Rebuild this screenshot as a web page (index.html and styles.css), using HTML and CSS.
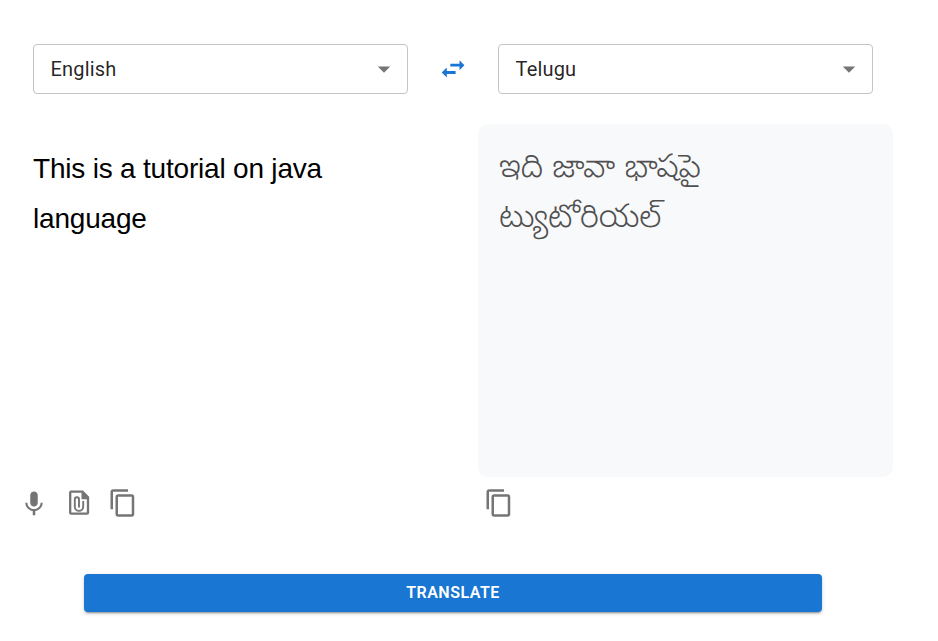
FILE: index.html
```html
<!DOCTYPE html>
<html lang="en">
<head>
<meta charset="utf-8">
<title>Translator</title>
<link rel="stylesheet" href="styles.css">
</head>
<body>
<main class="translator">
  <div class="languages">
    <div class="select"><span>English</span><svg class="arrow" viewBox="0 0 24 24"><path d="M7 10l5 5 5-5z"/></svg></div>
    <div class="swap"><svg viewBox="0 0 30 26"><path d="M12.300 7.800h9.200V4.300l4.900 5-4.900 5v-3.700h-9.200zM17.600 15.100H8.800V11.600L3.700 16.600l5.100 5v-3.700h8.800z"/></svg></div>
    <div class="select"><span>Telugu</span><svg class="arrow" viewBox="0 0 24 24"><path d="M7 10l5 5 5-5z"/></svg></div>
  </div>
  <div class="panels">
    <div class="panel source">This is a tutorial on java language</div>
    <div class="panel result" lang="te">ఇది జావా భాషపై<br>ట్యుటోరియల్</div>
  </div>
  <div class="tools">
    <div class="group">
      <svg class="mic" viewBox="0 -0.7 24 24"><path d="M12 14c1.660 0 3-1.340 3-3V5c0-1.660-1.340-3-3-3S9 3.340 9 5v6c0 1.660 1.340 3 3 3zm5.300-3c0 3-2.540 5.100-5.300 5.100S6.700 14 6.700 11H5c0 3.410 2.720 6.230 6 6.720V21h2v-3.280c3.280-.48 6-3.300 6-6.720z"/></svg>
      <svg class="attach" viewBox="0 0 30 30"><path class="fold" d="M17.500 3L25 10v1.300h-7.500z"/><path class="sheet" d="M6.800 3.700h11.700l5.500 5.500v15.500a1 1 0 0 1-1 1H7.200a1 1 0 0 1-1-1V4.700a1 1 0 0 1 .6-1z"/><path class="clip" d="M15 19.500V11.300a2.100 2.100 0 0 0-4.200 0v7.400a4.200 4.200 0 0 0 8.400 0V13"/></svg>
      <svg class="copy" viewBox="0 0 24 24"><path d="M16 1H4c-1.100 0-2 .9-2 2v14h2V3h12V1zm3 4H8c-1.100 0-2 .9-2 2v14c0 1.100.9 2 2 2h11c1.100 0 2-.9 2-2V7c0-1.100-.9-2-2-2zm0 16H8V7h11v14z"/></svg>
    </div>
    <div class="group">
      <svg class="copy" viewBox="0 0 24 24"><path d="M16 1H4c-1.100 0-2 .9-2 2v14h2V3h12V1zm3 4H8c-1.100 0-2 .9-2 2v14c0 1.100.9 2 2 2h11c1.100 0 2-.9 2-2V7c0-1.100-.9-2-2-2zm0 16H8V7h11v14z"/></svg>
    </div>
  </div>
  <button class="translate">TRANSLATE</button>
</main>
</body>
</html>
```
FILE: styles.css
```css
* { box-sizing: border-box; }
body { margin: 0; background: #fff; font-family: Roboto, sans-serif; }
.translator { width: 938px; height: 641px; padding-top: 44px; overflow: hidden; }
.languages { display: grid; grid-template-columns: 375px 90px 375px; margin-left: 33px; height: 50px; }
.select { display: flex; align-items: center; justify-content: space-between; border: 1px solid #c4c4c4; border-radius: 4px; padding: 0 8px 0 16.6px; font-size: 20px; letter-spacing: .15px; color: rgba(0,0,0,.87); }
.arrow { width: 30px; height: 30px; fill: #757575; }
.swap { display: flex; align-items: center; justify-content: center; }
.swap svg { width: 30px; height: 26px; fill: #1976d2; }
.panels { display: grid; grid-template-columns: 415px 415px; gap: 50px; margin: 30px 0 0 13px; }
.panel { height: 353px; padding: 20px; border-radius: 10px; font: 28px/50px "Liberation Sans", Arial, sans-serif; color: #000; }
.source { padding-right: 60px; letter-spacing: -.2px; }
.result { padding: 22px 20px 20px 21px; background: #f8f9fb; color: #505050; font: 300 32.5px/50px "Noto Sans Telugu", "Liberation Sans", sans-serif; }
.tools { display: grid; grid-template-columns: 465px 1fr; margin: 11px 0 0 19px; height: 30px; }
.group { display: flex; align-items: center; }
.group svg { width: 30px; height: 30px; fill: #757575; }
.attach { margin-left: 15px; }
.attach .sheet, .attach .clip { fill: none; stroke: #757575; stroke-width: 2.3; }
.attach .clip { stroke-width: 1.9; }
.attach + .copy { margin-left: 14px; }
.translate { display: block; width: 738px; height: 38px; margin: 56px 0 0 84px; padding: 0 0 2px; border: 0; border-radius: 4px; background: #1976d2; color: #fff; font: 600 16px Roboto, sans-serif; letter-spacing: .5px; box-shadow: 0 3px 1px -2px rgba(0,0,0,.2), 0 2px 2px rgba(0,0,0,.14), 0 1px 5px rgba(0,0,0,.12); }
```
